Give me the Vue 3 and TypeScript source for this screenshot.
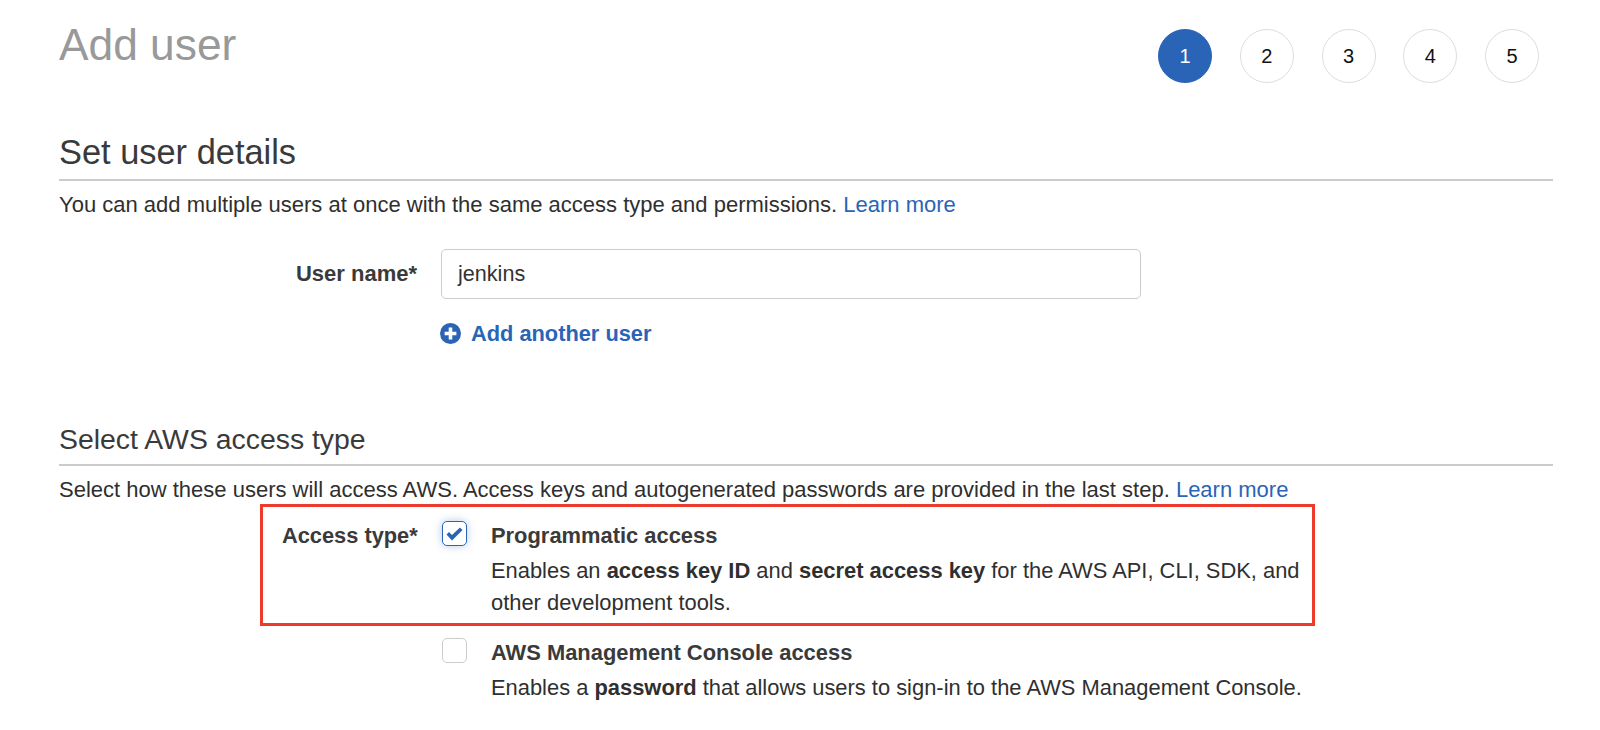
<script setup lang="ts">
const steps: number[] = [1, 2, 3, 4, 5]
</script>

<template>
  <div class="page">
    <header class="top">
      <h1 class="title">Add user</h1>
      <ol class="steps">
        <li v-for="s in steps" :key="s" class="step" :class="{ active: s === 1 }">{{ s }}</li>
      </ol>
    </header>

    <section class="details">
      <h2 class="h-large">Set user details</h2>
      <p class="intro">You can add multiple users at once with the same access type and permissions. <a class="link">Learn more</a></p>
      <div class="name-row">
        <label class="name-label">User name*</label>
        <div class="name-input">jenkins</div>
      </div>
      <a class="add">
        <svg class="add-icon" viewBox="0 0 20 20" width="21" height="21">
          <circle cx="10" cy="10" r="10" fill="#2a64b7" />
          <path d="M10 4.4v11.2M4.4 10h11.2" stroke="#fff" stroke-width="3.4" fill="none" />
        </svg>
        <span>Add another user</span>
      </a>
    </section>

    <section class="access">
      <h2 class="h-small">Select AWS access type</h2>
      <p class="intro">Select how these users will access AWS. Access keys and autogenerated passwords are provided in the last step. <a class="link">Learn more</a></p>
      <div class="highlight">
        <label class="type-label">Access type*</label>
        <span class="check checked">
          <svg viewBox="0 0 17 14" width="17" height="14">
            <path d="M0.5 7.5L3 5l3 3L14 0.5l2.5 2.5L6 13.5z" fill="#2a64b7" />
          </svg>
        </span>
        <div class="opt">
          <div class="opt-title">Programmatic access</div>
          <div class="opt-text">Enables an <b>access key ID</b> and <b>secret access key</b> for the AWS API, CLI, SDK, and other development tools.</div>
        </div>
      </div>
      <div class="second">
        <span class="check"></span>
        <div class="opt">
          <div class="opt-title">AWS Management Console access</div>
          <div class="opt-text">Enables a <b>password</b> that allows users to sign-in to the AWS Management Console.</div>
        </div>
      </div>
    </section>
  </div>
</template>

<style scoped>
.page {
  width: 1600px;
  height: 730px;
  overflow: hidden;
  box-sizing: border-box;
  padding: 0 47px 0 59px;
  font-family: "Liberation Sans", Arial, sans-serif;
  color: #2f2f2f;
  background: #fff;
}
.top {
  display: flex;
  justify-content: space-between;
  height: 132px;
}
.title {
  margin: 20px 0 0;
  font-size: 44.3px;
  line-height: 50px;
  font-weight: 400;
  color: #999;
}
.steps {
  display: flex;
  gap: 27.75px;
  list-style: none;
  margin: 29px 14px 0 0;
  padding: 0;
}
.step {
  width: 54px;
  height: 54px;
  box-sizing: border-box;
  border: 1px solid #ddd;
  border-radius: 50%;
  display: flex;
  align-items: center;
  justify-content: center;
  font-size: 20px;
  color: #111;
}
.step.active {
  background: #2a64b7;
  border-color: #2a64b7;
  color: #fff;
}
.h-large,
.h-small {
  margin: 0;
  font-weight: 400;
  color: #3a3a3a;
  border-bottom: 2px solid #ccc;
}
.h-large {
  font-size: 34.4px;
  line-height: 40px;
  padding-bottom: 7px;
}
.h-small {
  font-size: 28.4px;
  line-height: 34px;
  padding-bottom: 8px;
}
.intro {
  margin: 0;
  padding-top: 11px;
  font-size: 22px;
  line-height: 26px;
}
.link {
  color: #2a64b7;
}
.name-row {
  display: flex;
  align-items: center;
  margin-top: 31px;
}
.name-label {
  width: 358px;
  box-sizing: border-box;
  text-align: right;
  font-weight: 700;
  font-size: 22px;
  color: #3a3a3a;
}
.name-input {
  width: 700px;
  height: 50px;
  margin-left: 24px;
  box-sizing: border-box;
  border: 1.5px solid #ccc;
  border-radius: 5px;
  padding: 0 16px;
  display: flex;
  align-items: center;
  font-size: 21.6px;
  color: #333;
}
.add {
  display: flex;
  align-items: center;
  gap: 10px;
  margin: 22px 0 0 381px;
  color: #2a64b7;
  font-size: 21.8px;
  font-weight: 700;
  line-height: 26px;
}
.add-icon {
  flex: none;
  margin-top: -2px;
}
.access {
  margin-top: 75px;
}
.highlight {
  display: flex;
  width: 1055px;
  height: 122px;
  box-sizing: border-box;
  margin: 1px 0 0 201px;
  border: 3px solid #ee3a2c;
  padding-top: 14px;
}
.type-label {
  width: 179px;
  box-sizing: border-box;
  padding-left: 19px;
  font-weight: 700;
  font-size: 21.8px;
  line-height: 30px;
  color: #3a3a3a;
  white-space: nowrap;
}
.check {
  flex: none;
  width: 25px;
  height: 25px;
  box-sizing: border-box;
  border: 1.5px solid #ccc;
  border-radius: 5px;
  display: flex;
  align-items: center;
  justify-content: center;
  background: #fff;
}
.check.checked {
  border-color: #2a64b7;
  box-shadow: 0 0 8px rgba(42, 100, 183, 0.35);
}
.opt {
  margin-left: 24px;
  width: 820px;
}
.opt-title {
  font-weight: 700;
  font-size: 21.9px;
  line-height: 30px;
  color: #3a3a3a;
}
.opt-text {
  font-size: 21.9px;
  line-height: 32px;
  margin-top: 4px;
}
.second {
  display: flex;
  margin: 12px 0 0 383px;
}
</style>
